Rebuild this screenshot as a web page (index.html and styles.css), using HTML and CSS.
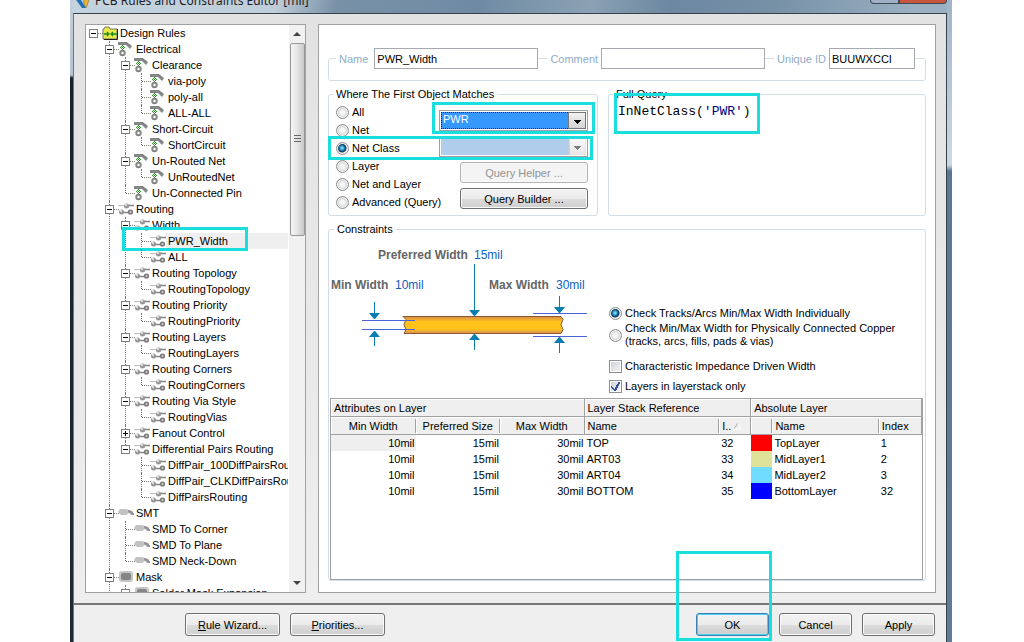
FILE: index.html
```html
<!DOCTYPE html>
<html lang="en">
<head>
<meta charset="utf-8">
<title>PCB Rules and Constraints Editor [mil]</title>
<link rel="stylesheet" href="styles.css">
</head>
<body>
<svg class="sprite" aria-hidden="true">
  <symbol id="i-folder" viewBox="0 0 16 16"><path d="M1 4h1l1-2h4l1 2h7v10H1z" fill="#e8ea4a" stroke="#77775a"/><path d="M15.500 4v10.500H2" fill="none" stroke="#222"/><path d="M2 9h4M10 9h5M5 7l2 2-2 2M11 7L9 9l2 2" fill="none" stroke="#198a19" stroke-width="1.300"/></symbol>
  <symbol id="i-elec" viewBox="0 0 16 16"><path d="M0 1h9l5 4-2 3-4-4H0z" fill="#858585"/><path d="M4 4h1v1H4zM3 5h1v1H3zM5 5h1v1H5zM2 6h1v1H2zM4 6h1v1H4zM6 6h1v1H6zM3 7h1v1H3zM5 7h1v1H5zM4 8h1v1H4z" fill="#149414"/><circle cx="4.500" cy="12" r="2.200" fill="#fff" stroke="#858585" stroke-width="2"/></symbol>
  <symbol id="i-route" viewBox="0 0 16 16"><path d="M0 4.500h8" stroke="#c4c4c4"/><path d="M9 4.500h7M4 11.500h8" stroke="#858585" stroke-width="1.300"/><circle cx="8.500" cy="5" r="2.500" fill="#929292"/><circle cx="8" cy="4" r="1.300" fill="#ddd"/><circle cx="3.500" cy="11" r="2.500" fill="#929292"/><circle cx="3" cy="10" r="1.300" fill="#ddd"/><circle cx="12.500" cy="11" r="1.800" fill="#ddd" stroke="#777" stroke-width="1.600"/></symbol>
  <symbol id="i-smt" viewBox="0 0 16 16"><path d="M0 7l2-3h6l3 1 3 1 2 3v1h-3l-2-2-3 2H3z" fill="#c2c2c2"/><path d="M10 5l4 1 2 3v1h-2l-2-2-2-1" fill="#929292"/></symbol>
  <symbol id="i-mask" viewBox="0 0 16 16"><rect x="1" y="2" width="14" height="11" rx="3" fill="#c6c6c6"/><rect x="3" y="4" width="10" height="7" rx="2" fill="#858585"/></symbol>
</svg>

<div class="window">
  <header class="titlebar">
    <svg class="logo" viewBox="0 0 18 16" aria-hidden="true"><path d="M1 4h5l7 11H9z" fill="#1f6fb5"/><path d="M7 4l6 9V4z" fill="#9cc7e4"/><path d="M11 3l5 4-3 8-2-4z" fill="#f0b42c" stroke="#7a6a3a" stroke-width=".6"/></svg>
    <span class="title">PCB Rules and Constraints Editor [mil]</span>
    <span class="caption"><button class="cap" aria-label="Minimize"></button><button class="cap close" aria-label="Close"></button></span>
  </header>
  <div class="client">
    <div class="panes">
      <nav class="tree" aria-label="Design rules">
        <div class="treeview">
          <ul class="root">
            <li><div class="row"><button class="exp" aria-label="Collapse"></button><svg><use href="#i-folder"/></svg><span>Design Rules</span></div>
              <ul>
                <li><div class="row"><button class="exp" aria-label="Collapse"></button><svg><use href="#i-elec"/></svg><span>Electrical</span></div>
                  <ul>
                    <li><div class="row"><button class="exp" aria-label="Collapse"></button><svg><use href="#i-elec"/></svg><span>Clearance</span></div>
                      <ul>
                        <li><div class="row"><svg><use href="#i-elec"/></svg><span>via-poly</span></div></li>
                        <li><div class="row"><svg><use href="#i-elec"/></svg><span>poly-all</span></div></li>
                        <li><div class="row"><svg><use href="#i-elec"/></svg><span>ALL-ALL</span></div></li>
                      </ul></li>
                    <li><div class="row"><button class="exp" aria-label="Collapse"></button><svg><use href="#i-elec"/></svg><span>Short-Circuit</span></div>
                      <ul><li><div class="row"><svg><use href="#i-elec"/></svg><span>ShortCircuit</span></div></li></ul></li>
                    <li><div class="row"><button class="exp" aria-label="Collapse"></button><svg><use href="#i-elec"/></svg><span>Un-Routed Net</span></div>
                      <ul><li><div class="row"><svg><use href="#i-elec"/></svg><span>UnRoutedNet</span></div></li></ul></li>
                    <li><div class="row"><svg><use href="#i-elec"/></svg><span>Un-Connected Pin</span></div></li>
                  </ul></li>
                <li><div class="row"><button class="exp" aria-label="Collapse"></button><svg><use href="#i-route"/></svg><span>Routing</span></div>
                  <ul>
                    <li><div class="row"><button class="exp" aria-label="Collapse"></button><svg><use href="#i-route"/></svg><span>Width</span></div>
                      <ul>
                        <li><div class="row"><svg><use href="#i-route"/></svg><span class="selected">PWR_Width</span><i class="mark mark-rule"></i></div></li>
                        <li><div class="row"><svg><use href="#i-route"/></svg><span>ALL</span></div></li>
                      </ul></li>
                    <li><div class="row"><button class="exp" aria-label="Collapse"></button><svg><use href="#i-route"/></svg><span>Routing Topology</span></div>
                      <ul><li><div class="row"><svg><use href="#i-route"/></svg><span>RoutingTopology</span></div></li></ul></li>
                    <li><div class="row"><button class="exp" aria-label="Collapse"></button><svg><use href="#i-route"/></svg><span>Routing Priority</span></div>
                      <ul><li><div class="row"><svg><use href="#i-route"/></svg><span>RoutingPriority</span></div></li></ul></li>
                    <li><div class="row"><button class="exp" aria-label="Collapse"></button><svg><use href="#i-route"/></svg><span>Routing Layers</span></div>
                      <ul><li><div class="row"><svg><use href="#i-route"/></svg><span>RoutingLayers</span></div></li></ul></li>
                    <li><div class="row"><button class="exp" aria-label="Collapse"></button><svg><use href="#i-route"/></svg><span>Routing Corners</span></div>
                      <ul><li><div class="row"><svg><use href="#i-route"/></svg><span>RoutingCorners</span></div></li></ul></li>
                    <li><div class="row"><button class="exp" aria-label="Collapse"></button><svg><use href="#i-route"/></svg><span>Routing Via Style</span></div>
                      <ul><li><div class="row"><svg><use href="#i-route"/></svg><span>RoutingVias</span></div></li></ul></li>
                    <li><div class="row"><button class="exp plus" aria-label="Expand"></button><svg><use href="#i-route"/></svg><span>Fanout Control</span></div></li>
                    <li><div class="row"><button class="exp" aria-label="Collapse"></button><svg><use href="#i-route"/></svg><span>Differential Pairs Routing</span></div>
                      <ul>
                        <li><div class="row"><svg><use href="#i-route"/></svg><span>DiffPair_100DiffPairsRouting</span></div></li>
                        <li><div class="row"><svg><use href="#i-route"/></svg><span>DiffPair_CLKDiffPairsRouting</span></div></li>
                        <li><div class="row"><svg><use href="#i-route"/></svg><span>DiffPairsRouting</span></div></li>
                      </ul></li>
                  </ul></li>
                <li><div class="row"><button class="exp" aria-label="Collapse"></button><svg><use href="#i-smt"/></svg><span>SMT</span></div>
                  <ul>
                    <li><div class="row"><svg><use href="#i-smt"/></svg><span>SMD To Corner</span></div></li>
                    <li><div class="row"><svg><use href="#i-smt"/></svg><span>SMD To Plane</span></div></li>
                    <li><div class="row"><svg><use href="#i-smt"/></svg><span>SMD Neck-Down</span></div></li>
                  </ul></li>
                <li class="more"><div class="row"><button class="exp" aria-label="Collapse"></button><svg><use href="#i-mask"/></svg><span>Mask</span></div>
                  <ul><li><div class="row"><button class="exp" aria-label="Collapse"></button><svg><use href="#i-mask"/></svg><span>Solder Mask Expansion</span></div></li></ul></li>
              </ul></li>
          </ul>
        </div>
        <div class="scrollbar"><span class="arrow up"></span><span class="thumb"></span><span class="arrow down"></span></div>
      </nav>

      <main class="editor">
        <div class="identity">
          <label for="name">Name</label><input id="name" class="f-name" value="PWR_Width">
          <label for="comment" class="later">Comment</label><input id="comment" class="f-name">
          <label for="uid" class="later">Unique ID</label><input id="uid" class="f-id" value="BUUWXCCI">
        </div>

        <div class="matching">
          <fieldset class="scope">
            <legend>Where The First Object Matches</legend>
            <div class="kinds">
              <label><input type="radio" name="kind">All</label>
              <label><input type="radio" name="kind">Net</label>
              <label><input type="radio" name="kind" checked>Net Class</label>
              <label><input type="radio" name="kind">Layer</label>
              <label><input type="radio" name="kind">Net and Layer</label>
              <label><input type="radio" name="kind">Advanced (Query)</label>
            </div>
            <div class="pickers">
              <span class="combo"><select aria-label="Net class"><option>PWR</option></select></span>
              <span class="combo off"><select aria-label="Layer" disabled><option></option></select></span>
              <button class="btn" disabled>Query Helper ...</button>
              <button class="btn">Query Builder ...</button>
            </div>
            <i class="mark mark-combo"></i>
            <i class="mark mark-kind"></i>
          </fieldset>
          <fieldset class="query">
            <legend>Full Query</legend>
            <code>InNetClass(<b>'PWR'</b>)</code>
            <i class="mark mark-query"></i>
          </fieldset>
        </div>

        <fieldset class="constraints">
          <legend>Constraints</legend>
          <div class="upper">
            <svg class="diagram" viewBox="0 0 276 120" role="img" aria-label="Track width limits">
              <defs><linearGradient id="track" x1="0" y1="0" x2="0" y2="1"><stop offset="0" stop-color="#d98a4a"/><stop offset=".3" stop-color="#ffc31c"/><stop offset=".75" stop-color="#ffc31c"/><stop offset="1" stop-color="#d98a5a"/></linearGradient></defs>
              <text class="cap-text" x="48" y="18">Preferred Width</text><text class="val" x="144" y="18">15mil</text>
              <text class="cap-text" x="1" y="48">Min Width</text><text class="val" x="65" y="48">10mil</text>
              <text class="cap-text" x="159" y="48">Max Width</text><text class="val" x="226" y="48">30mil</text>
              <path d="M73 75.500h158l2 3-2 5 2 5-2 4H74l2-4-2-5 2-5z" fill="url(#track)" stroke="#8a5a34"/>
              <path d="M32 79.500h53M32 88.500h53M203 72.500h54M203 95.500h54" stroke="#4a62d8"/>
              <g fill="#0a7db5"><path d="M44 61h1v11h5l-5 6h-1l-5-6h5zM44 105h1v-9h5l-5-6h-1l-5 6h5zM144 23h1v46h5l-5 6h-1l-5-6h5zM144 109h1V99h5l-5-6h-1l-5 6h5zM229 55h1v11h5l-5 6h-1l-5-6h5zM229 112h1v-10h5l-5-6h-1l-5 6h5z"/></g>
            </svg>
            <div class="options">
              <label><input type="radio" name="check" checked>Check Tracks/Arcs Min/Max Width Individually</label>
              <label class="two"><input type="radio" name="check"><span>Check Min/Max Width for Physically Connected Copper<br>(tracks, arcs, fills, pads &amp; vias)</span></label>
              <label class="tick first"><input type="checkbox">Characteristic Impedance Driven Width</label>
              <label class="tick"><input type="checkbox" checked>Layers in layerstack only</label>
            </div>
          </div>
          <div class="grid">
            <table>
              <colgroup><col class="c-attr"><col class="c-attr"><col class="c-attr"><col class="c-name"><col class="c-idx"><col class="c-color"><col class="c-layer"><col class="c-last"></colgroup>
              <thead>
                <tr><th colspan="3">Attributes on Layer</th><th colspan="2">Layer Stack Reference</th><th colspan="3">Absolute Layer</th></tr>
                <tr class="sub"><th class="mid part">Min Width</th><th class="mid part">Preferred Size</th><th class="mid">Max Width</th><th class="part">Name</th><th>I.. <svg class="sort" viewBox="0 0 8 8" aria-label="ascending"><path d="M0 7L4 1" stroke="#aaa"/><path d="M4 1l3 6H0" fill="none" stroke="#fff"/></svg></th><th class="part"></th><th class="part">Name</th><th>Index</th></tr>
              </thead>
              <tbody>
                <tr><td class="num current">10mil</td><td class="num">15mil</td><td class="num">30mil</td><td>TOP</td><td>32</td><td class="red"></td><td>TopLayer</td><td>1</td></tr>
                <tr><td class="num">10mil</td><td class="num">15mil</td><td class="num">30mil</td><td>ART03</td><td>33</td><td class="khaki"></td><td>MidLayer1</td><td>2</td></tr>
                <tr><td class="num">10mil</td><td class="num">15mil</td><td class="num">30mil</td><td>ART04</td><td>34</td><td class="sky"></td><td>MidLayer2</td><td>3</td></tr>
                <tr><td class="num">10mil</td><td class="num">15mil</td><td class="num">30mil</td><td>BOTTOM</td><td>35</td><td class="blue"></td><td>BottomLayer</td><td>32</td></tr>
              </tbody>
            </table>
          </div>
        </fieldset>
      </main>
    </div>
    <footer class="actions">
      <button class="btn wide"><u>R</u>ule Wizard...</button>
      <button class="btn wide"><u>P</u>riorities...</button>
      <span class="push"></span>
      <span class="confirm"><button class="btn primary">OK</button><i class="mark mark-ok"></i></span>
      <button class="btn">Cancel</button>
      <button class="btn">Apply</button>
    </footer>
  </div>
</div>
</body>
</html>
```

FILE: styles.css
```css
* { box-sizing: border-box; }

body {
  margin: 0;
  background: #fff;
  color: #000;
  font: 11px/16px "Liberation Sans", Arial, sans-serif;
}

button, input, select { font: inherit; color: inherit; margin: 0; }
ul { list-style: none; margin: 0; padding: 0; }
.sprite { display: none; }

/* Window frame */
.window {
  display: flex;
  flex-direction: column;
  height: 100vh;
  min-height: 600px;
  margin: 0 72px 0 70px;
  padding: 0 5px 0 3px;
  overflow: hidden;
  background:
    linear-gradient(#c3d0dc, #b4c4d2 75px, #16232f 78px, #1d2b38) left / 3px 100% no-repeat,
    linear-gradient(#9fb4c6, #cdd8e2 165px, #5c7890 171px, #607b93) right / 5px 100% no-repeat,
    #b4c4d2;
}

.titlebar {
  display: flex;
  align-items: flex-end;
  gap: 4px;
  height: 13px;
  padding-bottom: 4px;
  background: linear-gradient(100deg, #c5d3df 0, #c0ced9 200px, #7891a7 260px, #6f8ba3 400px, #8ba1b4 510px, #6c88a0 590px, #7690a6 690px, #9bb0c2 830px);
}
.logo { flex: none; width: 18px; height: 16px; }
.title { flex: 1; font: 12px/16px "Noto Sans", "Open Sans", sans-serif; color: #1c1c24; }
.caption { display: flex; align-self: flex-start; }
.cap { width: 29px; height: 4px; padding: 0; border: 1px solid #3d4b59; border-top: 0; border-radius: 0 0 0 4px; background: #9fb0c4; }
.cap.close { width: 48px; border-radius: 0 0 4px 0; background: #c8563c; }

.client {
  flex: 1;
  min-height: 0;
  display: flex;
  flex-direction: column;
  border: 1px solid #34424e;
  border-left-color: #2389e8;
  border-bottom: 0;
  background: linear-gradient(#e2e2e2, #efefef);
}

.panes {
  flex: 1;
  min-height: 0;
  display: flex;
  gap: 12px;
  padding: 10px 10px 10px 11px;
  border-bottom: 2px solid #777;
}

/* Rule tree */
.tree {
  flex: none;
  display: flex;
  width: 221px;
  border: 1px solid #a0a0a0;
  background: #fff;
}
.treeview { flex: 1; min-width: 0; overflow: hidden; white-space: nowrap; padding-right: 1px; }
.root { overflow: hidden; }
.tree li { position: relative; padding-left: 16px; }
.tree li li::before {
  content: "";
  position: absolute;
  left: 7px;
  top: 0;
  bottom: 0;
  border-left: 1px dotted #777;
}
.tree li li:last-child:not(.more)::before { bottom: auto; height: 8px; }
.row { position: relative; display: flex; height: 16px; }
.row::before {
  content: "";
  position: absolute;
  left: -8px;
  top: 8px;
  width: 9px;
  border-top: 1px dotted #777;
}
.row > svg { flex: none; position: relative; width: 16px; height: 16px; }
.row > span { flex: 1; padding-left: 2px; }
.row > .selected { background: #efefef; }
.exp {
  position: absolute;
  left: -13px;
  top: 4px;
  width: 9px;
  height: 9px;
  padding: 0;
  border: 1px solid #808080;
  background: linear-gradient(#000, #000) center / 5px 1px no-repeat, #fff;
}
.exp.plus {
  background:
    linear-gradient(#000, #000) center / 5px 1px no-repeat,
    linear-gradient(#000, #000) center / 1px 5px no-repeat, #fff;
}

.scrollbar {
  display: flex;
  flex-direction: column;
  align-items: center;
  width: 16px;
  background: #f1f1f1;
}
.arrow { width: 16px; height: 18px; display: grid; place-items: center; }
.arrow::after { content: ""; border: 4px solid transparent; }
.up::after { border-top: 0; border-bottom-color: #444; }
.down { margin-top: auto; }
.down::after { border-bottom: 0; border-top-color: #444; }
.thumb {
  width: 15px;
  height: 34%;
  border: 1px solid #999;
  border-radius: 2px;
  background:
    repeating-linear-gradient(#666 0 1px, transparent 1px 3px) center / 7px 9px no-repeat,
    linear-gradient(90deg, #f5f5f5, #e6e6e6 45%, #c9c9cd);
}

/* Rule editor */
.editor {
  flex: 1;
  min-width: 0;
  display: flex;
  flex-direction: column;
  padding: 23px 9px 11px;
  border: 1px solid #a0a0a0;
  background: #fff;
}

.identity {
  position: relative;
  display: flex;
  align-items: center;
  height: 33px;
  padding: 0 11px 12px 8px;
}
.identity::before {
  content: "";
  position: absolute;
  inset: 10px 0 0;
  border: 1px solid #d3dde6;
  border-radius: 3px;
}
.identity label { position: relative; flex: none; padding: 0 6px 0 3px; background: #fff; color: #8fabc8; }
.identity .later { margin-left: 9px; padding-right: 3px; }
.identity input {
  position: relative;
  min-width: 0;
  height: 21px;
  padding: 0 2px;
  border: 1px solid #a8a8b0;
  background: #fff;
}
.identity .f-name { flex: 1; }
.identity .f-id { flex: none; width: 86px; }

fieldset {
  position: relative;
  min-width: 0;
  margin: 0;
  padding: 0;
  border: 1px solid #d3dde6;
  border-radius: 3px;
}
legend { margin-left: 4px; padding: 0 3px; line-height: 14px; }

.matching { display: grid; grid-template-columns: 270fr 318fr; gap: 10px; height: 129px; margin-top: 6px; }
.scope > .kinds { position: relative; padding-left: 7px; display: grid; grid-auto-rows: 18px; width: 110px; float: left; white-space: nowrap; }
.kinds { margin-top: 2px; }
label { display: flex; align-items: center; }
input[type="radio"], input[type="checkbox"] { appearance: none; flex: none; width: 13px; height: 13px; margin-right: 3px; border: 1px solid #8e8f8f; }
input[type="radio"] { border-radius: 50%; background: radial-gradient(#f6f6f6 25%, #c9ccd0 70%); box-shadow: inset 0 0 0 1px #f4f4f4; }
input[type="radio"]:checked { background: radial-gradient(circle at 5px 5px, #6bd0f0 0 1px, #0b6394 3px, #0c2f4d 4px, #e8edf0 5px); }
input[type="checkbox"] { background: linear-gradient(135deg, #cdd0d6, #f6f6f6); box-shadow: inset 0 0 0 1px #fff; }
input[type="checkbox"]:checked {
  background:
    linear-gradient(45deg, transparent 44%, #35509c 44% 58%, transparent 58%) 1px 5px / 4px 5px no-repeat,
    linear-gradient(118deg, transparent 40%, #35509c 40% 62%, transparent 62%) 4px 1px / 6px 9px no-repeat,
    linear-gradient(135deg, #cdd0d6, #f6f6f6);
}

.pickers { display: flex; flex-direction: column; gap: 5px; padding: 9px 9px 0 0; }
.pickers .btn { align-self: flex-end; width: 128px; height: 21px; }
.combo { position: relative; display: block; height: 21px; border: 1px solid #a0a0a0; padding: 1px; background: #fff; }
.combo select {
  display: block;
  appearance: none;
  width: calc(100% - 16px);
  height: 17px;
  padding: 0 1px 2px;
  border: 1px dotted #fff;
  border-radius: 0;
  outline: 1px dotted #1a1a40;
  outline-offset: -1px;
  background: #3498fd;
  color: #fff;
  line-height: 13px;
}
.combo::after {
  content: "";
  position: absolute;
  inset: 1px 1px 1px auto;
  width: 16px;
  border: 1px solid #777;
  background: linear-gradient(#000, #000) center 7px / 7px 1px no-repeat, linear-gradient(#000, #000) center 8px / 5px 1px no-repeat, linear-gradient(#000, #000) center 9px / 3px 1px no-repeat, linear-gradient(#000, #000) center 10px / 1px 1px no-repeat, linear-gradient(#f2f2f2, #d2d2d2);
}
.combo.off select { border: 0; outline: 0; background: #b0cdec; opacity: 1; }
.combo.off::after { border-color: #ccc; opacity: .5; }

.btn {
  padding: 0;
  border: 1px solid #707070;
  border-radius: 3px;
  background: linear-gradient(#f3f3f3, #ebebeb 50%, #dcdcdc 50%, #cfcfcf);
  box-shadow: inset 0 0 0 1px #fafafa;
  line-height: 14px;
}
.btn:disabled { color: #939393; border-color: #b3b3b3; background: #f4f4f4; }

.query code { display: block; padding: 2px 9px; font: 13px/18px "Liberation Mono", "Courier New", monospace; }
.query b { font-weight: 400; color: #000080; }

/* Constraints */
.constraints { flex: 1; min-height: 0; display: flex; flex-direction: column; margin-top: 6px; padding: 0 2px 0 1px; }
.upper { display: flex; height: 162px; }
.diagram { flex: none; width: 276px; height: 120px; margin-top: 5px; }
.cap-text { font-weight: 700; font-size: 12px; fill: #666; }
.val { font-size: 12px; fill: #0a5fc4; }
.options { margin: 69px 0 0 3px; white-space: nowrap; }
.options .two { margin-top: 1px; line-height: 13px; }
.options .tick { margin-top: 4px; }
.options .first { margin-top: 10px; }

.grid { flex: 1; min-height: 0; border: 1px solid #a0a0a0; overflow: hidden; }
table { width: 100%; table-layout: fixed; border-collapse: separate; border-spacing: 0; }
th, td { height: 16px; padding: 0 0 0 2px; line-height: 16px; text-align: left; font-weight: 400; white-space: nowrap; overflow: hidden; }
th { height: 18px; padding-left: 3px; border-right: 1px solid #a0a0a0; border-bottom: 1px solid #a0a0a0; background: #efefef; box-shadow: inset 1px 1px #fff; }
.sub .part { border-right-width: 0; background: linear-gradient(#a0a0a0, #a0a0a0) right 2px / 1px 14px no-repeat, #efefef; }
.mid { text-align: center; padding: 0; }
td.num { text-align: right; padding: 0 1px 0 0; }
.c-attr { width: 14.300%; }
.c-name { width: 22.800%; }
.c-idx { width: 5.400%; }
.c-color { width: 3.600%; }
.c-layer { width: 18%; }
.sort { width: 8px; height: 8px; }
.current { background: #efefef; }
.red { background: #f00; }
.khaki { background: #dfe399; }
.sky { background: #70dcff; }
.blue { background: #00f; }

/* Footer */
.actions { flex: none; display: flex; gap: 10px; height: 37px; padding: 8px 11px 6px 111px; background: #efefef; }
.actions .btn { width: 73px; height: 23px; }
.actions .wide { width: 95px; }
.push { flex: 1; }
.confirm { position: relative; }
.actions .primary { border-color: #3c7fb1; box-shadow: inset 0 0 0 1px #48d0f5; }

/* Highlight frames laid over the dialog */
.mark { position: absolute; border: 3px solid #1adede; pointer-events: none; }
.mark-rule { inset: -6px auto auto -28px; width: 126px; height: 24px; }
.mark-combo { right: 2px; top: 1px; width: 163px; height: 32px; }
.mark-kind { left: -1px; right: 4px; top: 35px; height: 24px; }
.mark-query { left: 5px; top: -8px; width: 146px; height: 41px; }
.mark-ok { left: -20px; top: -62px; width: 96px; height: 90px; }
```
